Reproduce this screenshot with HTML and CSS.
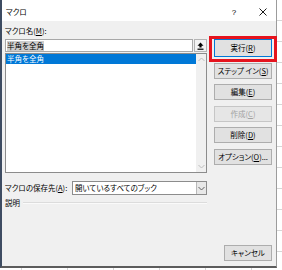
FILE: index.html
```html
<!DOCTYPE html>
<html lang="ja">
<head>
    <meta charset="UTF-8">
    <meta name="viewport" content="width=device-width, initial-scale=1.0">
    <title>マクロ</title>
    <link rel="stylesheet" href="styles.css">
</head>
<body>
    <div class="dialog">
        <div class="titlebar">
            <span class="title">マクロ</span>
            <span class="title-help">?</span>
            <span class="title-close">
                <svg width="8" height="8" viewBox="0 0 8 8"><path d="M0.5 0.5L7.5 7.5M7.5 0.5L0.5 7.5" stroke="#000" stroke-width="0.9" fill="none"/></svg>
            </span>
        </div>

        <div class="content">
            <div class="left-col">
                <div class="label">マクロ名(<u>M</u>):</div>
                <div class="name-row">
                    <div class="name-input"><span class="sel-text">半角を全角</span></div>
                    <div class="collapse-btn">
                        <svg width="7" height="8" viewBox="0 0 7 8"><path d="M3.5 0.5L6.5 3.8H4.6V5.6H2.4V3.8H0.5Z" fill="#000"/><rect x="0.5" y="6.6" width="6" height="1.2" fill="#000"/></svg>
                    </div>
                </div>
                <div class="listbox">
                    <div class="list-items">
                        <div class="list-item selected">半角を全角</div>
                    </div>
                    <div class="scrollbar">
                        <svg width="7" height="5" viewBox="0 0 7 5"><path d="M0.5 4L3.5 1L6.5 4" stroke="#bdbdbd" fill="none"/></svg>
                        <svg width="7" height="5" viewBox="0 0 7 5"><path d="M0.5 1L3.5 4L6.5 1" stroke="#bdbdbd" fill="none"/></svg>
                    </div>
                </div>
                <div class="store-row">
                    <span class="store-label">マクロの保存先(<u>A</u>):</span>
                    <div class="combo">
                        <span class="combo-text">開いているすべてのブック</span>
                        <span class="combo-btn">
                            <svg width="7" height="5" viewBox="0 0 7 5"><path d="M0.5 1L3.5 4L6.5 1" stroke="#606060" fill="none"/></svg>
                        </span>
                    </div>
                </div>
                <div class="desc">
                    <span>説明</span>
                    <span class="desc-line"></span>
                </div>
            </div>

            <div class="right-col">
                <div class="highlight">
                    <button class="btn default">実行(<u>R</u>)</button>
                </div>
                <button class="btn">ステップ イン(<u>S</u>)</button>
                <button class="btn">編集(<u>E</u>)</button>
                <button class="btn" disabled>作成(<u>C</u>)</button>
                <button class="btn">削除(<u>D</u>)</button>
                <button class="btn">オプション(<u>O</u>)...</button>
                <button class="btn cancel">キャンセル</button>
            </div>
        </div>
    </div>
</body>
</html>
```

FILE: styles.css
```css
body {
    margin: 0;
    width: 282px;
    height: 270px;
    overflow: hidden;
    background-color: #ffffff;
    background-image:
        repeating-linear-gradient(to bottom, transparent 0, transparent 20px, #d6d6d6 20px, #d6d6d6 21px),
        repeating-linear-gradient(to right, transparent 0, transparent 21px, #d6d6d6 21px, #d6d6d6 22px, transparent 22px, transparent 46px);
    font-family: "Noto Sans CJK JP", "Noto Sans", sans-serif;
    font-size: 7.5px;
    font-feature-settings: "palt";
    color: #000;
}

u {
    text-decoration-thickness: 1px;
    text-underline-offset: 1px;
}

.dialog {
    width: 277px;
    height: 268px;
    box-sizing: border-box;
    background: #f0f0f0;
    border-left: 2px solid #3e4c62;
    border-right: 1px solid #9c9c9c;
    border-bottom: 2px solid #5c5c5c;
    display: flex;
    flex-direction: column;
}

.titlebar {
    height: 21px;
    box-sizing: border-box;
    flex: none;
    background: #ffffff;
    display: flex;
    align-items: center;
    padding: 3px 0 0 4px;
}

.title {
    flex: 1;
    line-height: 10px;
}

.title-help {
    width: 30px;
    text-align: center;
    font-family: "Liberation Sans", sans-serif;
    font-size: 8px;
}

.title-close {
    width: 27px;
    display: flex;
    justify-content: center;
}

.content {
    flex: 1;
    display: grid;
    grid-template-columns: 202px 58px;
    column-gap: 7px;
    padding: 5px 0 5px 3px;
}

.left-col {
    display: flex;
    flex-direction: column;
}

.label {
    line-height: 10px;
    margin-bottom: 3px;
}

.name-row {
    display: flex;
    height: 13px;
}

.name-input {
    flex: 1;
    background: #fff;
    border: 1px solid #a8a8a8;
    display: flex;
    align-items: center;
    padding-left: 1px;
}

.sel-text {
    background: #cdcdcd;
    line-height: 10px;
}

.collapse-btn {
    width: 11px;
    margin-left: 1px;
    background: #f3f3f3;
    border: 1px solid #b4b4b4;
    display: flex;
    align-items: center;
    justify-content: center;
}

.listbox {
    margin-top: 1px;
    height: 120px;
    box-sizing: border-box;
    background: #fff;
    border: 1px solid #8c8c8c;
    display: flex;
}

.list-items {
    flex: 1;
}

.list-item {
    height: 10px;
    line-height: 10px;
    padding-left: 1px;
}

.list-item.selected {
    background: #0078d7;
    color: #fff;
}

.scrollbar {
    width: 10px;
    background: #f0f0f0;
    display: flex;
    flex-direction: column;
    justify-content: space-between;
    align-items: center;
    padding: 3px 0;
}

.store-row {
    margin-top: 8px;
    display: flex;
    align-items: center;
}

.store-label {
    width: 67px;
    line-height: 10px;
}

.combo {
    flex: 1;
    height: 14px;
    box-sizing: border-box;
    background: #fff;
    border: 1px solid #8c8c8c;
    display: flex;
    align-items: center;
}

.combo-text {
    flex: 1;
    padding-left: 2px;
    line-height: 10px;
}

.combo-btn {
    width: 10px;
    height: 12px;
    box-sizing: border-box;
    background: #e8e8e8;
    border-left: 1px solid #b9b9b9;
    display: flex;
    align-items: center;
    justify-content: center;
}

.desc {
    margin-top: 3px;
    display: flex;
    align-items: center;
    gap: 3px;
    line-height: 10px;
}

.desc-line {
    flex: 1;
    height: 0;
    border-top: 1px solid #dcdcdc;
    border-bottom: 1px solid #fafafa;
}

.right-col {
    display: flex;
    flex-direction: column;
    gap: 5.5px;
    padding-top: 13px;
}

.highlight {
    position: relative;
    display: flex;
}

.highlight::after {
    content: "";
    position: absolute;
    top: -3px;
    left: -5px;
    right: -5px;
    bottom: -5px;
    border: 3px solid #e5141e;
}

.btn {
    width: 58px;
    height: 16px;
    margin: 0;
    padding: 0;
    background: #e1e1e1;
    border: 1px solid #adadad;
    font-family: inherit;
    font-size: 7.5px;
    font-feature-settings: "palt";
    color: #000;
    line-height: 10px;
}

.btn.default {
    height: 18px;
    border-color: #0078d7;
}

.btn:disabled {
    background: #e6e6e6;
    border-color: #c6c6c6;
    color: #a2a2a2;
}

.btn.cancel {
    margin-top: auto;
    width: 48px;
    align-self: flex-end;
}
```
